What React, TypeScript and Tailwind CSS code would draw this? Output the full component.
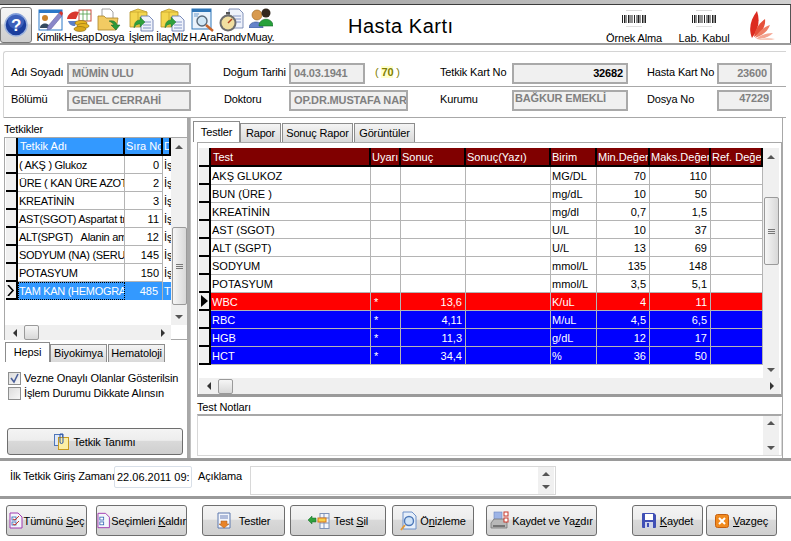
import React from "react";

const Help = () => (
  <svg width="24" height="24" viewBox="0 0 24 24">
    <circle cx="12" cy="12" r="11" fill="#1c3f9e" stroke="#9fb4dc" strokeWidth="1.5" />
    <circle cx="12" cy="8" r="8" fill="#5b82d8" opacity=".5" />
    <text x="12" y="18" textAnchor="middle" fontSize="17" fontWeight="700" fill="#fff" fontFamily="Liberation Sans">?</text>
  </svg>
);

const IdIcon = () => (
  <svg width="25" height="25" viewBox="0 0 25 25">
    <rect x="1" y="2" width="23" height="20" fill="#fff" stroke="#2b78c8" />
    <rect x="1" y="2" width="23" height="3" fill="#2b78c8" />
    <circle cx="7" cy="10" r="3" fill="#c9822b" />
    <path d="M2 20c0-6 10-6 10 0z" fill="#35495e" />
    <path d="M9 22l1-4L21 5l3 3-11 13z" fill="#8a87c9" stroke="#5c5a9a" strokeWidth=".5" />
    <path d="M21 5l2-2 2 2-1 3z" fill="#d9352b" />
  </svg>
);

const CoinsIcon = () => (
  <svg width="26" height="24" viewBox="0 0 26 24">
    <path d="M1 11a9 8 0 0 1 12-7l-3 7z" fill="#d9372c" />
    <path d="M2 13h9l-2 5c-4 0-6-2-7-5z" fill="#5b7fc7" />
    <rect x="13" y="2" width="12" height="11" fill="#fff" stroke="#c84a3a" />
    <path d="M13 6h12M17 2v11M21 2v11" stroke="#4fa04a" strokeWidth=".8" />
    <ellipse cx="15" cy="15" rx="6" ry="2.5" fill="#e6b421" stroke="#8a6a10" strokeWidth=".6" />
    <ellipse cx="17" cy="18" rx="6" ry="2.5" fill="#e6b421" stroke="#8a6a10" strokeWidth=".6" />
    <ellipse cx="14" cy="21" rx="6" ry="2.5" fill="#d9a61a" stroke="#8a6a10" strokeWidth=".6" />
  </svg>
);

const FolderIcon = () => (
  <svg width="25" height="25" viewBox="0 0 25 25">
    <path d="M5 1h8l3 3v12H5z" fill="#fff" stroke="#8c8c8c" strokeWidth=".8" />
    <path d="M1 8h6l2 2h12l-2 12H1z" fill="#f2cb63" stroke="#a9842a" strokeWidth=".8" />
    <path d="M12 13c5-1 7 1 8 4h3l-4 5-5-5h3c-1-2-3-3-5-4z" fill="#2c9a3a" stroke="#14602a" strokeWidth=".5" />
  </svg>
);

const BoxDocIcon = () => (
  <svg width="25" height="24" viewBox="0 0 25 24">
    <path d="M1 4l8-3 9 3v15H1z" fill="#f4d64e" stroke="#b3922a" strokeWidth=".8" />
    <path d="M1 4h17M9 4v15" stroke="#c9a52c" strokeWidth=".8" />
    <path d="M12 8h8l4 4v11H12z" fill="#eef2fb" stroke="#5c70a8" strokeWidth=".8" />
    <path d="M14 14h8M14 17h8M14 20h8" stroke="#6c82bb" strokeWidth=".8" />
    <path d="M5 20c0-5 2-8 6-8v-3l5 5-5 5v-3c-3 0-4 1-6 4z" fill="#2fa03c" stroke="#17682a" strokeWidth=".4" />
  </svg>
);

const SearchIcon = () => (
  <svg width="24" height="24" viewBox="0 0 24 24">
    <rect x="1" y="1" width="19" height="20" fill="#eaf2fb" stroke="#2f76b8" />
    <rect x="1" y="1" width="19" height="3" fill="#2f76b8" />
    <path d="M3 6h5M3 8h4" stroke="#6c9ccc" />
    <circle cx="11" cy="13" r="5" fill="#cfe6f6" stroke="#596a7a" strokeWidth="1.4" />
    <path d="M15 17l7 6" stroke="#c8642a" strokeWidth="2.4" />
  </svg>
);

const ClockIcon = () => (
  <svg width="25" height="25" viewBox="0 0 25 25">
    <path d="M10 1h10l4 4v15H10z" fill="#eef2fb" stroke="#6478a8" strokeWidth=".8" />
    <path d="M14 8h8M16 11h6M16 14h6" stroke="#6c82bb" strokeWidth=".8" />
    <circle cx="9" cy="15" r="8.5" fill="#6d6d6d" />
    <circle cx="9" cy="15" r="6.5" fill="#f1dfa0" />
    <path d="M9 15l4-4" stroke="#b3431f" strokeWidth="1.4" />
    <rect x="7" y="4" width="4" height="2.5" fill="#555" />
  </svg>
);

const PeopleIcon = () => (
  <svg width="24" height="20" viewBox="0 0 24 20">
    <circle cx="8" cy="7" r="5" fill="#d89a4e" stroke="#98641f" strokeWidth=".6" />
    <path d="M0 20c0-8 14-8 14 0z" fill="#6483c9" stroke="#37538f" strokeWidth=".6" />
    <circle cx="17" cy="5" r="4.5" fill="#33281e" />
    <path d="M10 18c0-9 14-9 14 0z" fill="#27a13a" stroke="#14672a" strokeWidth=".6" />
  </svg>
);

const Barcode = () => (
  <div className="flex flex-col items-center">
    <div className="w-[16px] h-px bg-[#d8d8d8]" />
    <svg width="24" height="8" viewBox="0 0 24 8" className="mt-[4px]">
      <path d="M0.5 0v8M2.5 0v8M4 0v8M6.5 0v8M8 0v8M10 0v8M12.5 0v8M15 0v8M16.5 0v8M18 0v8M20.5 0v8M22 0v8M23.5 0v8" stroke="#222" strokeWidth="1" />
    </svg>
    <div className="w-[16px] h-px bg-[#e0e0e0] mt-[3px]" />
  </div>
);

const Logo = () => (
  <svg width="28" height="30" viewBox="0 0 28 30">
    <path d="M3 28C-1 18 2 9 8 1c3 9 2 18-5 27z" fill="#dc2b20" />
    <path d="M5 27c1-8 5-13 11-18 1 7-3 14-11 18z" fill="#e6503a" />
    <path d="M6 28c3-6 9-11 15-13-2 6-8 11-15 13z" fill="#ee7f66" />
    <path d="M7 29c5-4 11-6 17-6-4 4-10 6-17 6z" fill="#f4a592" />
    <path d="M8 30c5-2 11-3 18-1-5 2-12 2-18 1z" fill="#f8c9bb" />
  </svg>
);

const toolbarItems = [
  { label: "Kimlik", icon: <IdIcon />, box: "w-[28px]" },
  { label: "Hesap", icon: <CoinsIcon />, box: "w-[30px]" },
  { label: "Dosya", icon: <FolderIcon />, box: "w-[31px]" },
  { label: "İşlem", icon: <BoxDocIcon />, box: "w-[32px]" },
  { label: "İlaçMlz", icon: <BoxDocIcon />, box: "w-[30px]" },
  { label: "H.Ara", icon: <SearchIcon />, box: "w-[31px]" },
  { label: "Randv", icon: <ClockIcon />, box: "w-[26px]" },
  { label: "Muay.", icon: <PeopleIcon />, box: "w-[33px]" },
];

const ReadOnly = ({ value, className, align = "" }: { value: string; className: string; align?: string }) => (
  <div className={`h-[21px] border-2 border-[#a9a9a9] bg-[#f0f0f0] text-[#808080] font-bold px-[3px] flex items-center overflow-hidden whitespace-nowrap ${align} ${className}`}>
    {value}
  </div>
);

const ArrowUp = () => <div className="w-0 h-0 border-x-[4px] border-x-transparent border-b-[4px] border-b-[#555]" />;
const ArrowDown = () => <div className="w-0 h-0 border-x-[4px] border-x-transparent border-t-[4px] border-t-[#555]" />;
const ArrowLeft = () => <div className="w-0 h-0 border-y-[4px] border-y-transparent border-r-[4px] border-r-[#333]" />;
const ArrowRight = () => <div className="w-0 h-0 border-y-[4px] border-y-transparent border-l-[4px] border-l-[#333]" />;

const Thumb = ({ className }: { className: string }) => (
  <div className={`border border-[#9a9a9a] rounded-[2px] bg-[linear-gradient(#f6f6f6,#d8d8d8)] ${className}`} />
);

const VScroll = ({ spacer, thumb, rest }: { spacer: string; thumb: string; rest: string }) => (
  <div className="flex flex-col items-center w-[16px] bg-[#f0f0f0] shrink-0 h-full">
    <div className="h-[17px] flex items-center justify-center shrink-0"><ArrowUp /></div>
    <div className={`shrink-0 ${spacer}`} />
    <div className={`w-[15px] shrink-0 border border-[#9a9a9a] rounded-[2px] bg-[linear-gradient(90deg,#f6f6f6,#d8d8d8)] flex flex-col items-center justify-center gap-px ${thumb}`}>
      <div className="w-[7px] h-px bg-[#777]" />
      <div className="w-[7px] h-px bg-[#777]" />
      <div className="w-[7px] h-px bg-[#777]" />
    </div>
    <div className={`shrink-0 ${rest}`} />
    <div className="h-[17px] flex items-center justify-center shrink-0"><ArrowDown /></div>
  </div>
);

const RowHead = ({ mark }: { mark?: React.ReactNode }) => (
  <div className="w-[12px] shrink-0 h-full bg-[#f0f0f0] border-r-2 border-b-2 border-black flex items-center justify-center">{mark}</div>
);

// left list columns
const tetkikRows = [
  ["( AKŞ ) Glukoz", "0", "İş"],
  ["ÜRE ( KAN ÜRE AZOTU )", "2", "İş"],
  ["KREATİNİN", "3", "İş"],
  ["AST(SGOT) Aspartat transaminaz", "11", "İş"],
  ["ALT(SPGT)   Alanin aminotransferaz", "12", "İş"],
  ["SODYUM (NA) (SERUM)", "145", "İş"],
  ["POTASYUM", "150", "İş"],
];

const testRows = [
  { name: "AKŞ GLUKOZ", flag: "", value: "", unit: "MG/DL", min: "70", max: "110", tone: "" },
  { name: "BUN (ÜRE )", flag: "", value: "", unit: "mg/dL", min: "10", max: "50", tone: "" },
  { name: "KREATİNİN", flag: "", value: "", unit: "mg/dl", min: "0,7", max: "1,5", tone: "" },
  { name: "AST (SGOT)", flag: "", value: "", unit: "U/L", min: "10", max: "37", tone: "" },
  { name: "ALT (SGPT)", flag: "", value: "", unit: "U/L", min: "13", max: "69", tone: "" },
  { name: "SODYUM", flag: "", value: "", unit: "mmol/L", min: "135", max: "148", tone: "" },
  { name: "POTASYUM", flag: "", value: "", unit: "mmol/L", min: "3,5", max: "5,1", tone: "" },
  { name: "WBC", flag: "*", value: "13,6", unit: "K/uL", min: "4", max: "11", tone: "bg-[#ff0000] text-white" },
  { name: "RBC", flag: "*", value: "4,11", unit: "M/uL", min: "4,5", max: "6,5", tone: "bg-[#0000ff] text-white" },
  { name: "HGB", flag: "*", value: "11,3", unit: "g/dL", min: "12", max: "17", tone: "bg-[#0000ff] text-white" },
  { name: "HCT", flag: "*", value: "34,4", unit: "%", min: "36", max: "50", tone: "bg-[#0000ff] text-white" },
];

const testCols = ["w-[160px]", "w-[30px]", "w-[65px]", "w-[85px]", "w-[46px]", "w-[53px]", "w-[61px]", "w-[52px]"];

const HeadCell = ({ w, children, dark = false }: { w: string; children?: React.ReactNode; dark?: boolean }) => (
  <div className={`${w} shrink-0 h-full border-r-2 border-b-2 border-black px-[1px] pt-px flex items-center overflow-hidden whitespace-pre text-white tracking-normal ${dark ? "bg-[#800000]" : "bg-[#3399ff]"}`}>
    {children}
  </div>
);

const Cell = ({ w, children, right = false }: { w: string; children?: React.ReactNode; right?: boolean }) => (
  <div className={`${w} shrink-0 h-full border-r border-b border-[#b4b4b4] px-[1px] pt-px flex items-center overflow-hidden whitespace-pre tracking-normal ${right ? "justify-end pr-[3px]" : ""}`}>
    {children}
  </div>
);

const Tab = ({ label, active = false, className = "" }: { label: string; active?: boolean; className?: string }) => (
  <div className={`flex items-center justify-center border border-b-0 border-[#8c8c8c] ${active ? "bg-white relative z-10" : "bg-[linear-gradient(#f4f4f4,#d9d9d9)] mt-[2px]"} ${className}`}>
    {label}
  </div>
);

const Button = ({ icon, children, className }: { icon?: React.ReactNode; children: React.ReactNode; className: string }) => (
  <div className={`shrink-0 flex items-center justify-center border border-[#6e6e6e] rounded-[3px] bg-[linear-gradient(#f4f4f4_0%,#ededed_45%,#d9d9d9_50%,#cfcfcf_100%)] whitespace-nowrap ${className}`}>
    {icon}
    <span className="pt-px">{children}</span>
  </div>
);

const TickDoc = ({ ticked }: { ticked: boolean }) => (
  <svg width="14" height="17" viewBox="0 0 14 17">
    <path d="M1 1h8l4 4v11H1z" fill="#f4f6fb" stroke="#a23bb0" />
    <rect x="3" y="5" width="4" height="3" fill="#fff" stroke="#2a5fb0" strokeWidth=".8" />
    <rect x="3" y="10" width="4" height="3" fill="#fff" stroke="#2a5fb0" strokeWidth=".8" />
    {ticked && <path d="M4 7l2 1 4-4M4 12l2 1 4-4" stroke="#c8372b" fill="none" />}
  </svg>
);

const ListDown = () => (
  <svg width="14" height="17" viewBox="0 0 14 17">
    <path d="M1 1h12v15H1z" fill="#f2f5fb" stroke="#5d78ae" />
    <path d="M3 4h8M3 6h8" stroke="#6c82bb" />
    <path d="M4 9h6v3h2l-5 4-5-4h2z" fill="#e8842a" stroke="#a85a18" strokeWidth=".5" />
  </svg>
);

const DeleteRow = () => (
  <svg width="22" height="16" viewBox="0 0 22 16">
    <rect x="12" y="0.5" width="9" height="15" fill="#f2f5fb" stroke="#7f93b8" />
    <path d="M12 5h9M12 10h9M16 0v16" stroke="#7f93b8" />
    <rect x="10" y="5" width="8" height="4" fill="#f6d14c" stroke="#d8741c" />
    <path d="M0 7l4-4v2h4v4H4v2z" fill="#2fa03c" stroke="#17682a" strokeWidth=".5" />
  </svg>
);

const Preview = () => (
  <svg width="17" height="20" viewBox="0 0 17 20">
    <path d="M3 1h9l4 4v13H3z" fill="#e6effa" stroke="#6c90c8" />
    <circle cx="9" cy="10" r="4.5" fill="#cfe3f7" stroke="#4d78b8" strokeWidth="1.4" />
    <path d="M5 14l-4 5" stroke="#e09a3a" strokeWidth="2" />
  </svg>
);

const PrinterIcon = () => (
  <svg width="20" height="20" viewBox="0 0 20 20">
    <rect x="4" y="1" width="8" height="8" fill="#9db4e6" stroke="#6b85c0" strokeWidth=".6" />
    <path d="M1 12l3-4h10l3 4v5H1z" fill="#b8b8b8" stroke="#6a6a6a" strokeWidth=".7" />
    <path d="M3 15h12" stroke="#333" />
    <rect x="14" y="1" width="4" height="4" fill="#fff" stroke="#c8372b" />
    <rect x="14" y="7" width="4" height="4" fill="#fff" stroke="#c8372b" />
  </svg>
);

const SaveIcon = () => (
  <svg width="14" height="15" viewBox="0 0 14 15">
    <path d="M0 1a1 1 0 0 1 1-1h11l2 2v12a1 1 0 0 1-1 1H1a1 1 0 0 1-1-1z" fill="#3f4fb5" />
    <rect x="3" y="1" width="8" height="6" fill="#fff" />
    <rect x="3" y="9" width="8" height="6" fill="#cfd4ea" />
    <rect x="5" y="10" width="2" height="4" fill="#3f4fb5" />
  </svg>
);

const CancelIcon = () => (
  <svg width="14" height="14" viewBox="0 0 14 14">
    <rect x=".5" y=".5" width="13" height="13" rx="2" fill="#f08a1e" stroke="#c45f10" />
    <path d="M4 4l6 6M10 4l-6 6" stroke="#fff" strokeWidth="2" />
  </svg>
);

const CardDoc = () => (
  <svg width="15" height="17" viewBox="0 0 15 17">
    <rect x=".5" y="1.5" width="8" height="11" fill="#dfe8f7" stroke="#4f76b8" />
    <rect x="4.5" y="4.5" width="10" height="12" fill="#fbeea6" stroke="#c89a20" />
    <path d="M6 1h3v8a1.5 1.5 0 0 1-3 0z" fill="none" stroke="#2a55a8" />
  </svg>
);

const Check = ({ on = false }: { on?: boolean }) => (
  <div className="w-[13px] h-[13px] border border-[#8e8f8f] bg-[linear-gradient(135deg,#dcdcdc,#f8f8f8)] flex items-center justify-center shrink-0">
    {on && (
      <svg width="11" height="11" viewBox="0 0 11 11">
        <path d="M2 5l3 4 4-8" fill="none" stroke="#4a5f9a" strokeWidth="1.6" />
      </svg>
    )}
  </div>
);

export default function App() {
  return (
    <div className="w-[791px] h-[541px] bg-white overflow-hidden flex flex-col text-[11px] leading-[13px] tracking-[-0.15px] text-black font-['Liberation_Sans',sans-serif]">
      <div className="h-[5px] shrink-0 border-b border-[#3c3c3c] bg-[linear-gradient(90deg,#8d8d8d,#d0d0d0)]" />

      <div className="h-[38px] shrink-0 flex items-stretch border-r border-[#555]">
        <div className="w-[32px] mt-[2px] shrink-0 border border-[#777] rounded-[3px] bg-[linear-gradient(#f4f4f4_0%,#ededed_45%,#d9d9d9_50%,#cfcfcf_100%)] flex items-center justify-center">
          <Help />
        </div>
        <div className="flex ml-[4px]">
          {toolbarItems.map((item) => (
            <div key={item.label} className={`${item.box} shrink-0 flex flex-col items-center`}>
              <div className="h-[26px] shrink-0 pt-[3px] flex justify-center">{item.icon}</div>
              <div className="whitespace-nowrap tracking-[-0.35px]">{item.label}</div>
            </div>
          ))}
        </div>
        <div className="w-[71px] shrink-0" />
        <div className="w-[90px] shrink-0 text-[20px] leading-[22px] tracking-[0.5px] pt-[10px] whitespace-nowrap">Hasta Kartı</div>
        <div className="w-[168px] shrink-0" />
        <div className="w-[56px] shrink-0 flex flex-col items-center pt-[5px]">
          <Barcode />
          <div className="mt-[5px] whitespace-nowrap">Örnek Alma</div>
        </div>
        <div className="w-[17px] shrink-0" />
        <div className="w-[50px] shrink-0 flex flex-col items-center pt-[5px]">
          <Barcode />
          <div className="mt-[5px] whitespace-nowrap">Lab. <u>K</u>abul</div>
        </div>
        <div className="ml-[20px] pt-[5px]"><Logo /></div>
      </div>

      <div className="h-[2px] shrink-0 bg-[#9a9a9a]" />

      <div className="h-[73px] shrink-0 pt-[6px] pl-[3px] pr-[5px]">
        <div className="border-l border-t border-[#d4d4d4] rounded-tl-[3px]">
          <div className="h-[35px] flex items-start pt-[11px] pl-[7px] border-b border-[#a8a8a8]">
            <div className="w-[56px] pt-[3px]">Adı Soyadı</div>
            <ReadOnly value="MÜMİN ULU" className="w-[124px]" />
            <div className="w-[66px] ml-[32px] pt-[3px]">Doğum Tarihi</div>
            <ReadOnly value="04.03.1941" className="w-[76px]" />
            <div className="ml-[10px] w-[65px] pt-[3px] text-[#808000]">
              ( <span className="font-bold bg-[#ffffcc]">70</span> )
            </div>
            <div className="w-[72px] pt-[3px]">Tetkik Kart No</div>
            <div className="h-[21px] w-[116px] border-2 border-[#a9a9a9] bg-[#f0f0f0] font-bold flex items-center justify-end px-[3px]">32682</div>
            <div className="w-[70px] ml-[19px] pt-[3px]">Hasta Kart No</div>
            <ReadOnly value="23600" className="w-[55px]" align="justify-end" />
          </div>
          <div className="h-[31px] flex items-start pt-[3px] pl-[7px] border-b border-[#a8a8a8]">
            <div className="w-[56px] pt-[3px]">Bölümü</div>
            <ReadOnly value="GENEL CERRAHİ" className="w-[124px]" />
            <div className="w-[66px] ml-[33px] pt-[3px] -mr-[1px]">Doktoru</div>
            <ReadOnly value="OP.DR.MUSTAFA NAR" className="w-[119px]" />
            <div className="w-[72px] ml-[32px] pt-[3px]">Kurumu</div>
            <div className="h-[21px] w-[116px] border-2 border-[#a9a9a9] bg-[#f0f0f0] text-[#808080] font-bold px-[1px] whitespace-nowrap">BAĞKUR EMEKLİ</div>
            <div className="w-[70px] ml-[19px] pt-[3px]">Dosya No</div>
            <div className="h-[21px] w-[55px] border-2 border-[#a9a9a9] bg-[#f0f0f0] text-[#808080] font-bold text-right px-[1px]">47229</div>
          </div>
        </div>
      </div>

      <div className="h-[343px] shrink-0 flex border-b-[3px] border-[#9a9a9a]">
        <div className="w-[190px] shrink-0 flex flex-col pl-[4px] border-r-[3px] border-[#a8a8a8]">
          <div className="h-[19px] pt-[5px] shrink-0">Tetkikler</div>
          <div className="h-[203px] w-[184px] shrink-0 border border-[#a8a8a8] flex flex-col">
            <div className="h-[187px] flex shrink-0">
              <div className="w-[166px] shrink-0 flex flex-col pl-px">
                <div className="h-[18px] flex shrink-0">
                  <RowHead />
                  <HeadCell w="w-[107px]"><span className="pl-[1px]">Tetkik Adı</span></HeadCell>
                  <HeadCell w="w-[38px]">Sıra No</HeadCell>
                  <HeadCell w="w-[8px]">D</HeadCell>
                </div>
                {tetkikRows.map(([name, order, state]) => (
                  <div key={name} className="h-[18px] flex shrink-0">
                    <RowHead />
                    <Cell w="w-[107px]"><span className="tracking-[-0.3px]">{name}</span></Cell>
                    <Cell w="w-[38px]" right>{order}</Cell>
                    <div className="w-[8px] pl-[1px] pt-px overflow-hidden h-full flex items-center whitespace-nowrap">{state}</div>
                  </div>
                ))}
                <div className="h-[18px] flex shrink-0">
                  <RowHead mark={<svg width="8" height="11" viewBox="0 0 8 11"><path d="M1 0l5 5.5L1 11" fill="none" stroke="#000" strokeWidth="1.6" /></svg>} />
                  <div className="w-[107px] h-full bg-[#3399ff] text-white border border-dotted border-black overflow-hidden whitespace-nowrap flex items-center tracking-[-0.3px]">TAM KAN (HEMOGRAM)</div>
                  <div className="w-[38px] h-full bg-[#3399ff] text-white flex items-center justify-end pr-[4px] border-r border-[#b4b4b4] tracking-normal">485</div>
                  <div className="w-[8px] h-full pl-[1px] bg-[#3399ff] text-white overflow-hidden flex items-center">T</div>
                </div>
              </div>
              <VScroll spacer="h-[72px]" thumb="h-[78px]" rest="h-[3px]" />
            </div>
            <div className="h-[15px] shrink-0 bg-[#f0f0f0] flex items-center w-[166px]">
              <div className="w-[19px] flex justify-center"><ArrowLeft /></div>
              <Thumb className="w-[15px] h-[15px]" />
              <div className="flex-1" />
              <div className="w-[17px] flex justify-center"><ArrowRight /></div>
            </div>
          </div>
          <div className="flex h-[20px] mt-[2px] shrink-0">
            <Tab label="Hepsi" active className="w-[45px] ml-px" />
            <Tab label="Biyokimya" className="w-[57px]" />
            <Tab label="Hematoloji" className="w-[57px] ml-[1px]" />
          </div>
          <div className="flex items-center gap-[3px] ml-[4px] mt-[10px] h-[13px]"><Check on />Vezne Onaylı Olanlar Gösterilsin</div>
          <div className="flex items-center gap-[3px] ml-[4px] mt-[2px] h-[13px]"><Check />İşlem Durumu Dikkate Alınsın</div>
          <Button icon={<CardDoc />} className="h-[27px] w-[176px] ml-[3px] mt-[28px] gap-[4px]">Tetkik Tanımı</Button>
        </div>

        <div className="w-[593px] shrink-0 flex flex-col border-r border-[#a8a8a8] pl-[2px] border-l border-l-[#c0c0c0]">
          <div className="flex h-[21px] mt-[3px] shrink-0">
            <Tab label="Testler" active className="w-[47px]" />
            <Tab label="Rapor" className="w-[41px]" />
            <Tab label="Sonuç Rapor" className="w-[71px] ml-[1px]" />
            <Tab label="Görüntüler" className="w-[61px] ml-[1px]" />
          </div>
          <div className="h-[255px] w-[585px] ml-[4px] border border-[#a8a8a8] border-b-[3px] border-b-[#9a9a9a] shrink-0 flex flex-col pt-[5px] pl-px">
            <div className="flex h-[230px] shrink-0">
              <div className="w-[564px] shrink-0 flex flex-col">
                <div className="h-[19px] flex shrink-0">
                  <RowHead />
                  <HeadCell w="w-[160px]" dark><span className="pl-[1px]">Test</span></HeadCell>
                  <HeadCell w="w-[30px]" dark>Uyarı</HeadCell>
                  <HeadCell w="w-[65px]" dark>Sonuç</HeadCell>
                  <HeadCell w="w-[85px]" dark>Sonuç(Yazı)</HeadCell>
                  <HeadCell w="w-[46px]" dark>Birim</HeadCell>
                  <HeadCell w="w-[53px]" dark>Min.Değer</HeadCell>
                  <HeadCell w="w-[61px]" dark>Maks.Değer</HeadCell>
                  <HeadCell w="w-[52px]" dark>Ref. Değer</HeadCell>
                </div>
                {testRows.map((row) => (
                  <div key={row.name} className={`h-[18px] flex shrink-0 ${row.tone}`}>
                    <RowHead mark={row.name === "WBC" ? <div className="w-0 h-0 border-y-[6px] border-y-transparent border-l-[7px] border-l-black" /> : undefined} />
                    <Cell w={testCols[0]}>{row.name}</Cell>
                    <Cell w={testCols[1]}><span className="pl-[2px]">{row.flag}</span></Cell>
                    <Cell w={testCols[2]} right>{row.value}</Cell>
                    <Cell w={testCols[3]} />
                    <Cell w={testCols[4]}>{row.unit}</Cell>
                    <Cell w={testCols[5]} right>{row.min}</Cell>
                    <Cell w={testCols[6]} right>{row.max}</Cell>
                    <Cell w={testCols[7]} />
                  </div>
                ))}
              </div>
              <VScroll spacer="h-[32px]" thumb="h-[68px]" rest="h-[96px]" />
            </div>
            <div className="h-[16px] w-[581px] shrink-0 bg-[#f0f0f0] flex items-center">
              <div className="w-[19px] flex justify-center"><ArrowLeft /></div>
              <Thumb className="w-[15px] h-[15px]" />
              <div className="flex-1" />
              <div className="w-[17px] flex justify-center"><ArrowRight /></div>
            </div>
          </div>
          <div className="h-[17px] pt-[4px] ml-[4px] shrink-0">Test Notları</div>
          <div className="h-[42px] w-[585px] ml-[4px] border border-[#d8d8d8] border-t-[#a8a8a8] border-t-2 flex justify-end shrink-0">
            <div className="w-[16px] mr-[2px] bg-[#f0f0f0] flex flex-col items-center justify-between py-[5px]">
              <ArrowUp />
              <ArrowDown />
            </div>
          </div>
        </div>
      </div>

      <div className="h-[38px] shrink-0 flex items-start pt-[5px] pl-[10px] border-b-[3px] border-[#9a9a9a]">
        <div className="w-[104px] whitespace-nowrap pt-[4px]">İlk Tetkik Giriş Zamanı</div>
        <div className="w-[78px] h-[22px] border border-[#d8dfe8] flex items-center px-[2px] overflow-hidden whitespace-nowrap rounded-[2px] tracking-normal">22.06.2011 09:</div>
        <div className="ml-[6px] w-[52px] pt-[4px]">Açıklama</div>
        <div className="w-[306px] h-[29px] border border-[#d8d8d8] flex justify-end">
          <div className="w-[16px] mr-[1px] bg-[#f0f0f0] flex flex-col items-center justify-between py-[5px]">
            <ArrowUp />
            <ArrowDown />
          </div>
        </div>
      </div>

      <div className="flex pt-[6px] pl-[6px]">
        <Button icon={<TickDoc ticked />} className="h-[31px] w-[81px] gap-[1px]">Tümünü <u>S</u>eç</Button>
        <Button icon={<TickDoc ticked={false} />} className="h-[31px] w-[91px] ml-[9px] gap-[1px]">Seçimleri <u>K</u>aldır</Button>
        <Button icon={<ListDown />} className="h-[31px] w-[83px] ml-[15px] gap-[8px]">Testler</Button>
        <Button icon={<DeleteRow />} className="h-[31px] w-[96px] ml-[5px] gap-[4px]">Test <u>S</u>il</Button>
        <Button icon={<Preview />} className="h-[31px] w-[82px] ml-[6px] gap-[3px]">Ö<u>n</u>izleme</Button>
        <Button icon={<PrinterIcon />} className="h-[31px] w-[111px] ml-[12px] gap-[2px]">Kaydet ve Ya<u>z</u>dır</Button>
        <Button icon={<SaveIcon />} className="h-[31px] w-[71px] ml-[35px] gap-[4px]"><u>K</u>aydet</Button>
        <Button icon={<CancelIcon />} className="h-[31px] w-[71px] ml-[3px] gap-[4px]"><u>V</u>azgeç</Button>
      </div>
    </div>
  );
}
